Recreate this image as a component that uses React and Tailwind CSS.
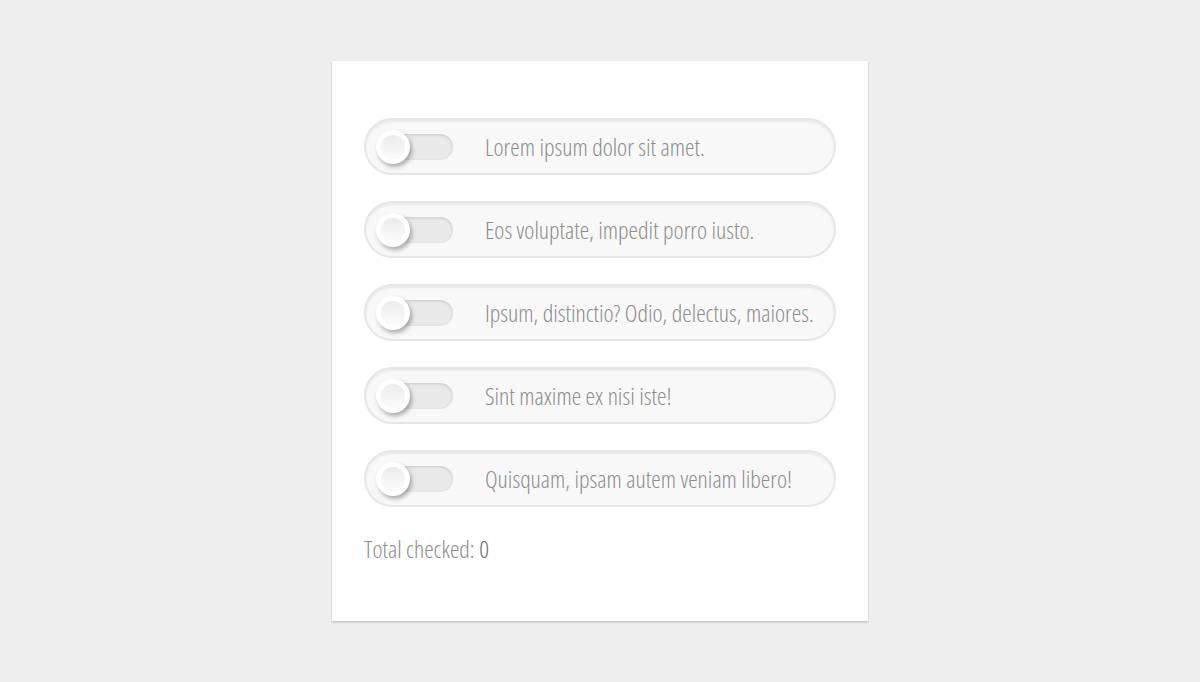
import { useState } from 'react';

const items = [
  'Lorem ipsum dolor sit amet.',
  'Eos voluptate, impedit porro iusto.',
  'Ipsum, distinctio? Odio, delectus, maiores.',
  'Sint maxime ex nisi iste!',
  'Quisquam, ipsam autem veniam libero!',
];

function Toggle({ label, checked, onChange }) {
  return (
    <label className="flex h-[57px] cursor-pointer items-center rounded-full border-2 border-[#e6e6e6] bg-[#f8f8f8] pl-[12px] shadow-[inset_0_2px_2px_rgba(0,0,0,0.06)]">
      <input type="checkbox" className="hidden" checked={checked} onChange={onChange} />
      <span className={`relative h-[26px] w-[75px] shrink-0 rounded-full shadow-[inset_0_1px_3px_rgba(0,0,0,0.15)] ${checked ? 'bg-[#9fd6a0]' : 'bg-[#e9e9e9]'}`}>
        <span className={`absolute top-[-4px] flex h-[34px] w-[34px] items-center justify-center rounded-full bg-white shadow-[2px_3px_4px_rgba(0,0,0,0.3)] ${checked ? 'left-[43px]' : 'left-[-2px]'}`}>
          <span className="h-[24px] w-[24px] rounded-full bg-gradient-to-b from-[#ececec] to-[#fbfbfb] shadow-[0_0_1px_rgba(0,0,0,0.08)]" />
        </span>
      </span>
      <span className="ml-[32px] text-[24px] leading-none text-[#8c8c8c]">{label}</span>
    </label>
  );
}

export default function App() {
  const [checked, setChecked] = useState(items.map(() => false));
  const total = checked.filter(Boolean).length;

  return (
    <div className="flex min-h-[682px] justify-center bg-[#eeeeee] pt-[61px] font-['Open_Sans',sans-serif] font-light font-stretch-condensed">
      <div className="h-[560px] w-[536px] bg-white px-8 pt-[57px] shadow-[0_1px_2px_rgba(0,0,0,0.25)]">
        <div className="flex flex-col gap-[26px]">
          {items.map((text, i) => (
            <Toggle
              key={i}
              label={text}
              checked={checked[i]}
              onChange={() => setChecked(c => c.map((v, j) => (j === i ? !v : v)))}
            />
          ))}
        </div>
        <p className="mt-[24px] text-[24px] leading-[36px] text-[#8c8c8c]">
          Total checked: <span className="font-[360] text-[#666]">{total}</span>
        </p>
      </div>
    </div>
  );
}
